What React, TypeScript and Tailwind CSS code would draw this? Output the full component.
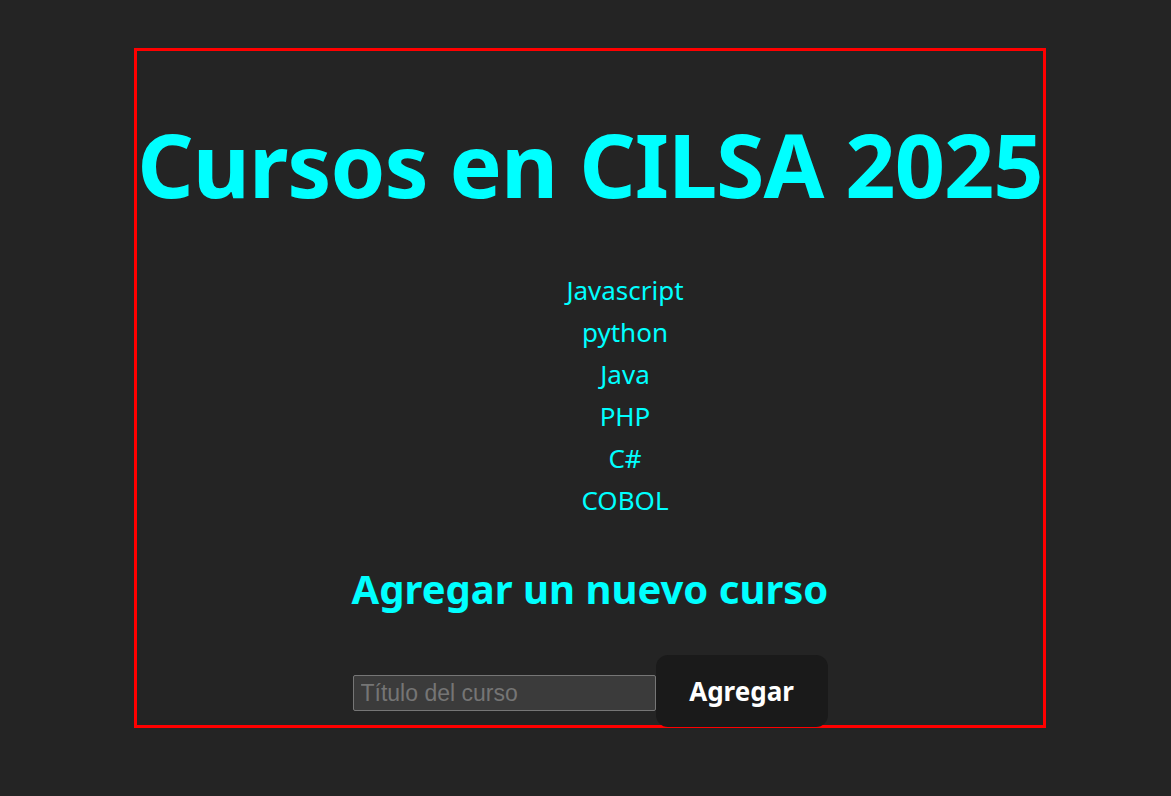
import React, { useState } from 'react';

const FONT = { fontFamily: '"Noto Sans", "Open Sans", sans-serif' };

const App: React.FC = () => {
  const [cursos, setCursos] = useState<string[]>(['Javascript', 'python', 'Java', 'PHP', 'C#', 'COBOL']);
  const [titulo, setTitulo] = useState('');

  const agregar = (e: React.FormEvent) => {
    e.preventDefault();
    if (!titulo.trim()) return;
    setCursos([...cursos, titulo.trim()]);
    setTitulo('');
  };

  return (
    <div className="min-h-screen w-full bg-[#242424] flex items-center justify-center" style={FONT}>
      <div className="w-[912px] h-[680px] ml-[9px] mb-[20px] border-[3px] border-[#ff0000] flex flex-col items-center">
        <h1 className="mt-[63px] text-[88px] font-bold leading-[100px] text-[#00ffff] whitespace-nowrap tracking-[-1px]">
          Cursos en CILSA 2025
        </h1>
        <ul className="mt-[55px] ml-[70px] flex flex-col items-center">
          {cursos.map((c) => (
            <li key={c} className="text-[26px] leading-[42px] text-[#00ffff]">
              {c}
            </li>
          ))}
        </ul>
        <h2 className="mt-[44px] text-[40px] font-bold leading-[48px] text-[#00ffff]">
          Agregar un nuevo curso
        </h2>
        <form onSubmit={agregar} className="mt-[42px] flex items-baseline">
          <input
            value={titulo}
            onChange={(e) => setTitulo(e.target.value)}
            placeholder="Título del curso"
            className="w-[303px] h-[36px] px-[7px] bg-[#3b3b3b] border border-[#767676] rounded-[2px] text-[23px] text-white placeholder:text-[#757575] outline-none"
            style={{ fontFamily: '"Liberation Sans", Arial, sans-serif' }}
          />
          <button
            type="submit"
            className="w-[172px] h-[72px] rounded-[12px] bg-[#1a1a1a] text-[26px] font-bold text-white"
          >
            Agregar
          </button>
        </form>
      </div>
    </div>
  );
};

export default App;
